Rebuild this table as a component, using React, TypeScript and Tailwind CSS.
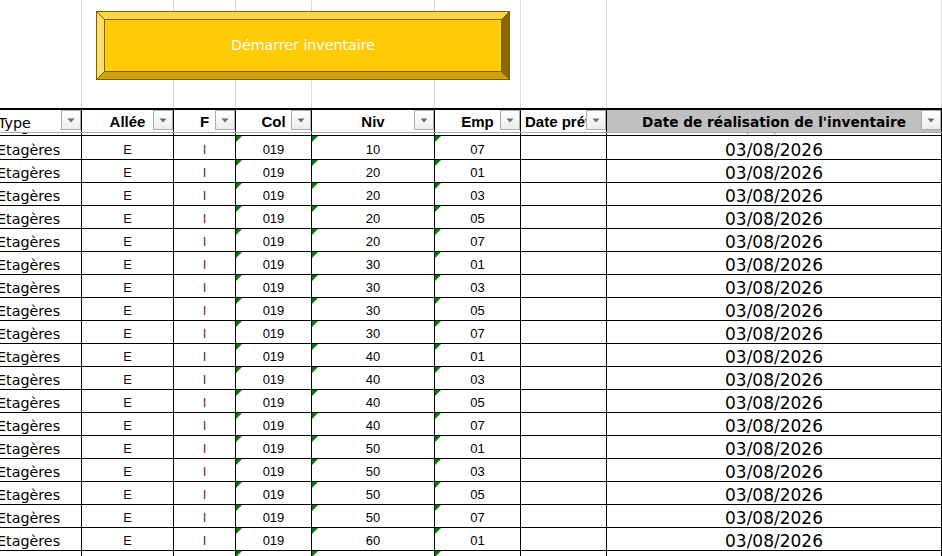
const W = ["w-[82px]", "w-[92px]", "w-[62px]", "w-[76px]", "w-[123px]", "w-[86px]", "w-[86px]", "w-[335px]"];

const gothic = "font-['DejaVu_Sans',sans-serif]";
const arial = "font-['Liberation_Sans',Arial,sans-serif]";

const rows: [string, string][] = [
  ["10", "07"],
  ["20", "01"],
  ["20", "03"],
  ["20", "05"],
  ["20", "07"],
  ["30", "01"],
  ["30", "03"],
  ["30", "05"],
  ["30", "07"],
  ["40", "01"],
  ["40", "03"],
  ["40", "05"],
  ["40", "07"],
  ["50", "01"],
  ["50", "03"],
  ["50", "05"],
  ["50", "07"],
  ["60", "01"],
];

const Corner = () => (
  <span className="absolute left-0 top-0 h-0 w-0 border-t-[6px] border-r-[6px] border-t-[#008000] border-r-transparent" />
);

const FilterBtn = () => (
  <span className="absolute right-0 top-0 z-10 flex h-[20px] w-[20px] items-center justify-center border border-[#a9acb2] bg-gradient-to-b from-white to-[#ededed]">
    <svg width="8" height="5" viewBox="0 0 8 5">
      <path d="M0.5 0.5h7L4 4.5z" fill="#6b6b6b" />
    </svg>
  </span>
);

const DataRow = ({ niv, emp, h }: { niv: string; emp: string; h: string }) => {
  const cell = "relative flex shrink-0 items-end border-r border-black leading-none";
  return (
    <div className={`flex shrink-0 border-b border-black ${h}`}>
      <div className={`${W[0]} ${cell} overflow-hidden whitespace-nowrap pb-[2px] text-[14.3px] text-black ${gothic}`}>
        <span className="-ml-[3px]">Etagères</span>
      </div>
      <div className={`${W[1]} ${cell} justify-center pb-[3px] text-[13px] text-[#1c0808] ${arial}`}>E</div>
      <div className={`${W[2]} ${cell} justify-center pb-[3px] text-[13px] text-[#7d1240] ${arial}`}>I</div>
      <div className={`${W[3]} ${cell} justify-center pb-[3px] text-[13px] text-black ${arial}`}>
        <Corner />
        019
      </div>
      <div className={`${W[4]} ${cell} justify-center pb-[3px] text-[13px] text-black ${arial}`}>
        <Corner />
        {niv}
      </div>
      <div className={`${W[5]} ${cell} justify-center pb-[3px] text-[13px] text-black ${arial}`}>
        <Corner />
        {emp}
      </div>
      <div className={`${W[6]} ${cell}`} />
      <div className={`${W[7]} ${cell} justify-center pb-0 text-[17px] text-black ${gothic}`}>03/08/2026</div>
    </div>
  );
};

const StartButton = () => (
  <div className="absolute left-[96px] top-[11px] h-[69px] w-[414px] border border-[#7f6000]">
    <div className="relative h-full w-full border-t-[7px] border-r-[7px] border-b-[7px] border-l-[7px] border-t-[#ffd445] border-r-[#8a6a00] border-b-[#cfa10a] border-l-[#ffdf72]">
      <div className="flex h-full w-full items-center justify-center border border-[#7f6000] bg-[#ffcb05]">
        <span className={`text-[14.2px] leading-none text-white ${gothic}`}>Démarrer inventaire</span>
      </div>
    </div>
    <svg className="pointer-events-none absolute inset-0" width="412" height="67" viewBox="0 0 412 67">
      <g stroke="#7f6000" strokeWidth="1">
        <line x1="0" y1="0" x2="7.5" y2="7.5" />
        <line x1="412" y1="0" x2="404.5" y2="7.5" />
        <line x1="0" y1="67" x2="7.5" y2="59.5" />
        <line x1="412" y1="67" x2="404.5" y2="59.5" />
      </g>
    </svg>
  </div>
);

export default function App() {
  const head = "relative flex shrink-0 items-center border-r border-black leading-none";
  return (
    <div className="relative flex h-[556px] w-[942px] flex-col overflow-hidden bg-white">
      {/* worksheet area above the table */}
      <div className="flex h-[108px] shrink-0">
        {W.map((w, i) => (
          <div key={i} className={`${w} shrink-0 border-r border-[#d9d9d9]`} />
        ))}
      </div>
      <StartButton />

      {/* header row */}
      <div className="flex h-[25px] shrink-0 border-t-2 border-b border-t-black border-b-[#a6a6a6]">
        <div className={`${W[0]} ${head} overflow-hidden whitespace-nowrap pt-[5px] text-[14.3px] ${gothic}`}>
          <span className="-ml-[2px]">Type</span>
          <FilterBtn />
        </div>
        <div className={`${W[1]} ${head} justify-center text-[15px] font-bold ${arial}`}>
          Allée
          <FilterBtn />
        </div>
        <div className={`${W[2]} ${head} justify-center text-[15px] font-bold ${arial}`}>
          F
          <FilterBtn />
        </div>
        <div className={`${W[3]} ${head} justify-center text-[15px] font-bold ${arial}`}>
          Col
          <FilterBtn />
        </div>
        <div className={`${W[4]} ${head} justify-center text-[15px] font-bold ${arial}`}>
          Niv
          <FilterBtn />
        </div>
        <div className={`${W[5]} ${head} justify-center text-[15px] font-bold ${arial}`}>
          Emp
          <FilterBtn />
        </div>
        <div className={`${W[6]} ${head} overflow-hidden whitespace-nowrap pl-[4px] text-[15px] font-bold ${arial}`}>
          Date prévue
          <FilterBtn />
        </div>
        <div className={`${W[7]} ${head} justify-center bg-[#c0c0c0] pt-[4px] text-[13.7px] font-bold ${gothic}`}>
          Date de réalisation de l'inventaire
          <FilterBtn />
        </div>
      </div>

      {/* scrolled-off row, only its bottom shows */}
      <div className="flex h-[3px] shrink-0 items-end overflow-hidden border-b border-black">
        <div className="shrink-0">
          <DataRow niv="10" emp="05" h="h-[23px] border-b-0" />
        </div>
      </div>

      {rows.map(([niv, emp], i) => (
        <DataRow key={i} niv={niv} emp={emp} h={i === 0 ? "h-[24px]" : "h-[23px]"} />
      ))}

      {/* next row, only its top shows */}
      <div className="h-[5px] shrink-0 overflow-hidden">
        <DataRow niv="60" emp="03" h="h-[23px]" />
      </div>
    </div>
  );
}
